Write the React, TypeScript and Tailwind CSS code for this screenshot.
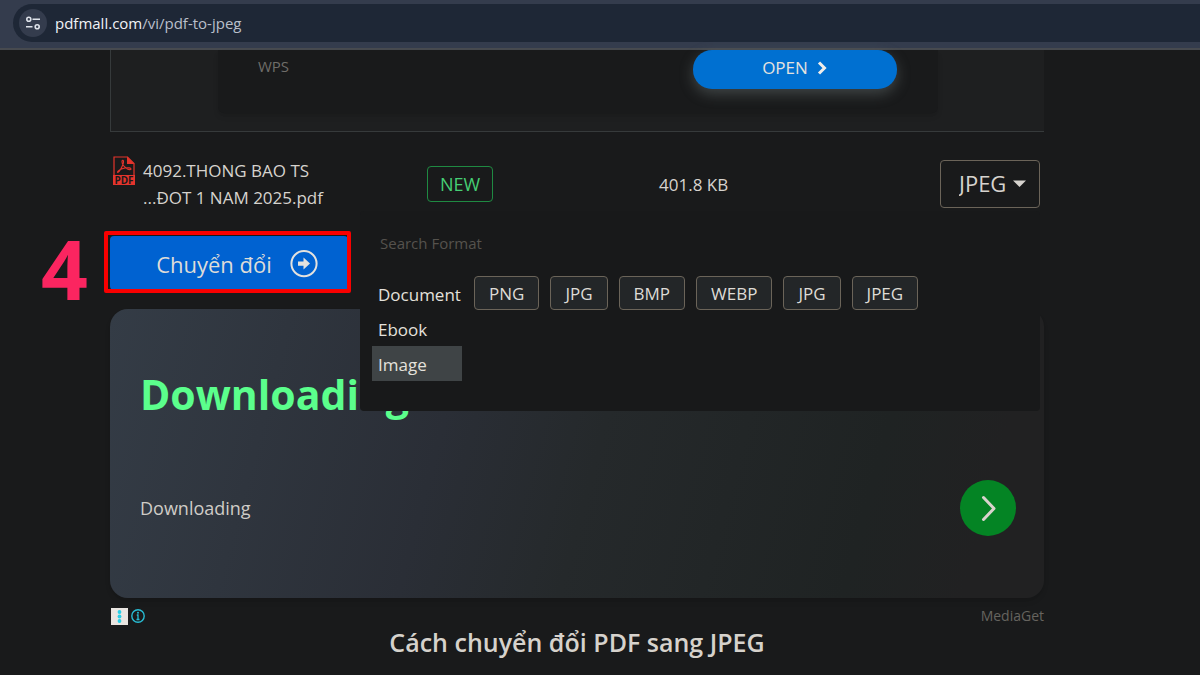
import React, { useState } from 'react';

const categories = ['Document', 'Ebook', 'Image'];
const formats = ['PNG', 'JPG', 'BMP', 'WEBP', 'JPG', 'JPEG'];

const AddressBar = () => {
  return (
    <header className="h-[50px] bg-[#343c4d] border-b-2 border-[#474a4f] pt-1 pl-[13px]">
      <div className="h-[38px] bg-[#1e2736] rounded-l-full flex items-center pl-1.5">
        <button aria-label="Site information" className="w-7 h-7 rounded-full bg-[#343c4d] flex items-center justify-center">
          <svg width="16" height="16" viewBox="0 0 16 16" fill="none" stroke="#dfe3ea" strokeWidth="1.6">
            <circle cx="3.8" cy="4.3" r="2" />
            <path d="M7.5 4.3H15M1 11.7h6.5" />
            <circle cx="12.2" cy="11.7" r="2" />
          </svg>
        </button>
        <a href="#" className="ml-2 text-[15px] text-[#b9bfca]">
          <span className="text-[#f1f3f6]">pdfmall.com</span>/vi/pdf-to-jpeg
        </a>
      </div>
    </header>
  );
};

const TopAd = () => {
  return (
    <section className="h-[82px] border-l border-b border-[#363a3b] bg-[#1e1f20] pl-[107px] pr-[106px]">
      <div className="h-[63px] rounded-b-md bg-[#191a1b] shadow-md flex items-start justify-between pl-10 pr-[41px]">
        <p className="mt-1 text-[15px] leading-6 text-[#6f6d69]">WPS</p>
        <button className="w-[204px] h-[39px] pb-1 rounded-[19px] bg-[#0070d1] text-[#e4e2df] flex items-center justify-center gap-2 shadow-[0_5px_14px_rgba(110,122,122,0.45)]">
          <span className="text-[17px]">OPEN</span>
          <svg width="12" height="14" viewBox="0 0 12 14" fill="none" stroke="#efedea" strokeWidth="3">
            <path d="M3 1.5L8.5 7L3 12.5" />
          </svg>
        </button>
      </div>
    </section>
  );
};

const PdfIcon = () => {
  return (
    <svg width="22" height="29" viewBox="0 0 22 29" className="shrink-0">
      <path d="M1 19V1h13.5L21 7.5V19" fill="none" stroke="#e3342c" strokeWidth="1.2" />
      <path d="M14 0.5L21.5 8H14z" fill="#e3342c" />
      <path
        d="M4.500 16c1-2.200 3.800-3.200 7.500-4 3.200-.5 6-.2 6 1s-2.600.8-4.600-.8C10.800 10.700 8.800 7.500 9 5.200c.2-1.200 1.400-1.200 1.500 0 .2 2.600-1.600 6-3.500 9-1.100 1.700-2.400 2.800-2.500 1.800z"
        fill="none"
        stroke="#e3342c"
        strokeWidth="1.1"
      />
      <rect x="0" y="19" width="22" height="10" fill="#e3342c" />
      <text x="11" y="27.5" textAnchor="middle" fontSize="10" fontWeight="700" fill="#191a1b">PDF</text>
    </svg>
  );
};

const FileRow = () => {
  const [format, setFormat] = useState('JPEG');

  return (
    <div className="grid grid-cols-[317px_232px_1fr_100px] items-center pt-6 text-[#d6d3ce] pr-1">
      <div className="flex items-start gap-2 pl-[3px]">
        <PdfIcon />
        <p className="pt-px text-[17px] leading-[27px]">
          4092.THONG BAO TS
          <br />
          ...ĐOT 1 NAM 2025.pdf
        </p>
      </div>
      <div>
        <span className="inline-flex items-center justify-center w-[66px] h-9 rounded border border-[#1f8a42] text-[#46cf74] text-lg">NEW</span>
      </div>
      <p className="pt-0.5 text-[17px]">401.8 KB</p>
      <div className="relative">
        <select
          aria-label="Output format"
          value={format}
          onChange={(e) => setFormat(e.target.value)}
          className="block appearance-none w-full h-12 pl-[18px] rounded border border-[#6b6459] bg-transparent text-[22px]"
        >
          <option>JPEG</option>
          <option>PNG</option>
          <option>BMP</option>
          <option>WEBP</option>
        </select>
        <svg className="absolute right-3.5 top-5 pointer-events-none" width="13" height="8" viewBox="0 0 13 8">
          <path d="M0 0.5h13L6.5 7z" fill="#d6d3ce" />
        </svg>
      </div>
    </div>
  );
};

const FormatMenu = () => {
  const [active, setActive] = useState('Image');

  return (
    <div className="absolute top-0 left-[250px] right-1 h-[200px] rounded bg-[#18191a] px-3 pt-4">
      <input
        type="text"
        aria-label="Search Format"
        placeholder="Search Format"
        className="block w-full h-8 px-2 text-[15px] bg-transparent outline-none placeholder:text-[#55524d]"
      />
      <div className="flex gap-3 mt-[17px]">
        <div className="w-[90px] shrink-0">
          {categories.map((name) => (
            <button
              key={name}
              onClick={() => setActive(name)}
              className={`block w-full h-[35px] pt-0.5 pl-1.5 text-left text-[17px] font-medium text-[#e4e1dc] ${name === active ? 'bg-[#3f4446]' : ''}`}
            >
              {name}
            </button>
          ))}
        </div>
        <div className="flex items-start gap-[11px]">
          {formats.map((name, i) => (
            <button key={i} className="h-[34px] px-3.5 pt-0.5 rounded border border-[#6b6459] bg-[#232628] text-[17px] font-medium text-[#dedbd6]">
              {name}
            </button>
          ))}
        </div>
      </div>
    </div>
  );
};

const DownloadAd = () => {
  return (
    <section className="mt-[19px]">
      <div className="h-[289px] rounded-[18px] bg-[linear-gradient(105deg,#343c46_0%,#2a2e36_36%,#25292b_52%,#1f2323_80%,#212122_92%)] shadow-md pl-[30px] pr-7 pt-[57px]">
        <h2 className="text-[41px] leading-14 font-bold text-[#5bff8c]">Downloading</h2>
        <div className="mt-[58px] flex items-center justify-between">
          <p className="text-lg text-[#cfccc7]">Downloading</p>
          <button aria-label="Download" className="w-14 h-14 rounded-full bg-[#048424] flex items-center justify-center">
            <svg width="16" height="26" viewBox="0 0 16 26" fill="none" stroke="#d9d3cd" strokeWidth="3" strokeLinecap="round" strokeLinejoin="round">
              <path d="M3.5 2.5L14 13.5L3.5 24.5" />
            </svg>
          </button>
        </div>
      </div>
      <div className="mt-2 flex items-center justify-between">
        <div className="flex items-center gap-0.5 pl-px">
          <svg width="17" height="17" viewBox="0 0 17 17">
            <rect width="17" height="17" fill="#e9e5e1" />
            <circle cx="8.5" cy="4" r="1.9" fill="#28cfe8" />
            <circle cx="8.5" cy="8.5" r="1.9" fill="#28cfe8" />
            <circle cx="8.5" cy="13" r="1.9" fill="#28cfe8" />
          </svg>
          <svg width="16" height="16" viewBox="0 0 16 16">
            <circle cx="8" cy="8" r="6.2" fill="none" stroke="#28bcd3" strokeWidth="1.4" />
            <circle cx="8" cy="4.7" r="1" fill="#28bcd3" />
            <path d="M6.8 7H8v4.5M6.500 11.500h3" fill="none" stroke="#28bcd3" strokeWidth="1.3" />
          </svg>
        </div>
        <p className="text-sm leading-5 text-[#66645f]">MediaGet</p>
      </div>
    </section>
  );
};

const App = () => {
  return (
    <div className="min-h-screen bg-[#191a1b] font-['Open_Sans','Noto_Sans',sans-serif]">
      <AddressBar />
      <main className="pl-[110px] pr-[156px]">
        <TopAd />
        <FileRow />
        <div className="relative pt-[25px]">
          <button className="w-[238px] h-[54px] pt-0.5 pl-4 rounded bg-[#0062d1] text-[#dedcd8] flex items-center justify-center gap-[18px]">
            <span className="text-[22px]">Chuyển đổi</span>
            <svg width="28" height="28" viewBox="0 0 28 28">
              <circle cx="14" cy="13.6" r="12.6" fill="none" stroke="#e4e2de" strokeWidth="2" />
              <path d="M8 11.400h5.500V7.600l6.500 6-6.500 6v-3.800H8z" fill="#e4e2de" />
            </svg>
          </button>
          {/* step marker */}
          <div className="absolute top-5 -left-1.5 w-[247px] h-[62px] border-4 border-[#f90000] rounded-xs pointer-events-none" />
          <span className="absolute top-4 -left-[69px] text-[82px] leading-[82px] font-bold text-[#fb2560]">4</span>
          <FormatMenu />
        </div>
        <DownloadAd />
        <h1 className="text-center text-[25px] leading-8 font-semibold text-[#d6d2cc]">Cách chuyển đổi PDF sang JPEG</h1>
      </main>
    </div>
  );
};

export default App;
